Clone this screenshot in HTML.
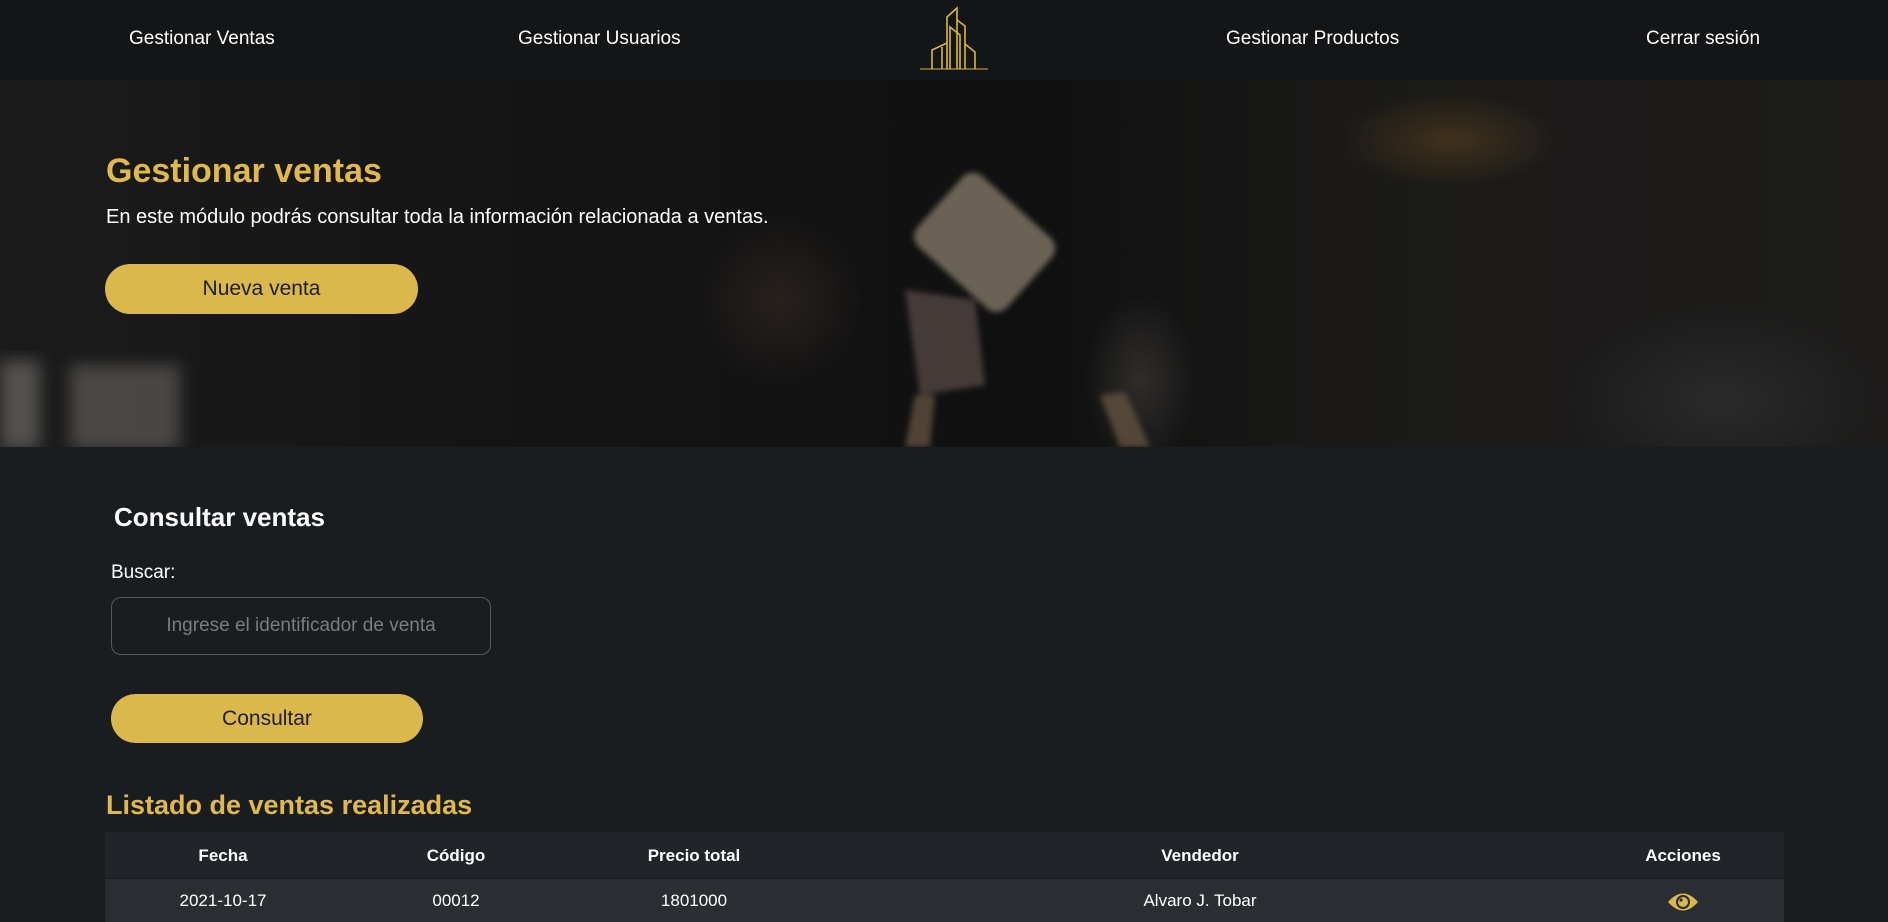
<!DOCTYPE html>
<html><head><meta charset="utf-8"><style>
*{margin:0;padding:0;box-sizing:border-box}
html,body{width:1888px;height:922px;overflow:hidden;background:#1a1d20;font-family:"Liberation Sans",sans-serif;color:#fff}
nav{position:absolute;left:0;top:0;width:1888px;height:80px;background:#141517}
nav a{position:absolute;top:28px;font-size:19px;color:#fff;text-decoration:none;line-height:22px}
.hero{position:absolute;left:0;top:80px;width:1888px;height:367px;overflow:hidden;
background:
radial-gradient(ellipse 140px 60px at 1450px 60px,rgba(120,85,30,.4),transparent 80%),
radial-gradient(ellipse 200px 120px at 1720px 320px,rgba(70,70,72,.35),transparent 80%),
radial-gradient(ellipse 110px 110px at 780px 220px,rgba(80,60,50,.35),transparent 80%),
radial-gradient(ellipse 70px 110px at 1140px 300px,rgba(90,85,80,.4),transparent 80%),
linear-gradient(90deg,#1b1b1b 0%,#141414 30%,#101010 55%,#1a1918 70%,#1d1c1b 100%)}
.hero svg{position:absolute;left:0;top:0}
h1{position:absolute;left:106px;top:152px;font-size:34px;color:#e1b94a;font-weight:bold}
.sub{position:absolute;left:106px;top:206px;font-size:20px}
.btn{position:absolute;background:#dab84c;border-radius:25px;color:#1e1e1e;font-size:21px;text-align:center}
h2{position:absolute;left:114px;top:502px;font-size:26px;font-weight:bold}
.lbl{position:absolute;left:111px;top:562px;font-size:19px}
.inp{position:absolute;left:111px;top:597px;width:380px;height:58px;border:1px solid #555a5f;border-radius:10px;color:#7a7d80;font-size:19px;text-align:center;line-height:56px}
h3{position:absolute;left:106px;top:790px;font-size:27px;color:#e1b94a;font-weight:bold}
.tbl{position:absolute;left:105px;top:832px;width:1679px;height:90px}
.hd{height:47px;background:#212428;border-bottom:1px solid #1a1c1f;position:relative}
.rw{height:43px;background:#2a2d31;position:relative}
.c{position:absolute;transform:translateX(-50%);font-size:17px;white-space:nowrap}
.hd .c{top:14px;font-weight:bold}
.rw .c{top:12px}
</style></head><body>
<nav>
<a style="left:129px">Gestionar Ventas</a>
<a style="left:518px">Gestionar Usuarios</a>
<svg style="position:absolute;left:919px;top:0" width="70" height="72" viewBox="0 0 70 72">
<g fill="none" stroke="#d9b83a" stroke-width="1.6">
<path d="M13 69V50L28 43"/><path d="M23 69V47"/>
<path d="M28 69V17L38 8V69"/><path d="M38 20L46 26V69"/>
<path d="M31 69V27L41 35V69"/><path d="M46 44L56 52V69"/>
</g><path d="M1 69H69" stroke="#d9b83a" stroke-width="1.2" opacity=".8"/></svg>
<a style="left:1226px">Gestionar Productos</a>
<a style="left:1646px">Cerrar sesión</a>
</nav>
<div class="hero">
<svg width="1888" height="367"><defs><filter id="b"><feGaussianBlur stdDeviation="8"/></filter><filter id="s"><feGaussianBlur stdDeviation="3"/></filter></defs>
<g transform="translate(0,-80)">
<g filter="url(#b)" opacity=".5">
<rect x="0" y="360" width="40" height="90" fill="#8a8580"/>
<rect x="70" y="365" width="110" height="85" fill="#7a7570"/>
</g>
<g filter="url(#s)">
<rect x="925" y="195" width="120" height="95" rx="14" transform="rotate(42 985 242)" fill="#6a6354"/>
<polygon points="905,290 975,300 985,385 920,395" fill="#4e4240" opacity=".85"/>
<polygon points="915,395 935,395 930,447 905,447" fill="#5e5040" opacity=".8"/>
<polygon points="1100,395 1125,392 1150,447 1120,447" fill="#605340" opacity=".8"/>
</g></g></svg>
</div>
<h1>Gestionar ventas</h1>
<div class="sub">En este módulo podrás consultar toda la información relacionada a ventas.</div>
<div class="btn" style="left:105px;top:264px;width:313px;height:50px;line-height:50px">Nueva venta</div>
<h2>Consultar ventas</h2>
<div class="lbl">Buscar:</div>
<div class="inp">Ingrese el identificador de venta</div>
<div class="btn" style="left:111px;top:694px;width:312px;height:49px;line-height:49px">Consultar</div>
<h3>Listado de ventas realizadas</h3>
<div class="tbl">
<div class="hd"><span class="c" style="left:118px">Fecha</span><span class="c" style="left:351px">Código</span><span class="c" style="left:589px">Precio total</span><span class="c" style="left:1095px">Vendedor</span><span class="c" style="left:1578px">Acciones</span></div>
<div class="rw"><span class="c" style="left:118px">2021-10-17</span><span class="c" style="left:351px">00012</span><span class="c" style="left:589px">1801000</span><span class="c" style="left:1095px">Alvaro J. Tobar</span>
<svg style="position:absolute;left:1562px;top:12px" width="32" height="22" viewBox="0 0 32 22"><path d="M1 11Q16 -6 31 11Q16 28 1 11Z" fill="#dab84c"/><circle cx="16" cy="11" r="6" fill="none" stroke="#2a2d31" stroke-width="2"/><circle cx="14" cy="9" r="1.6" fill="#2a2d31"/></svg></div>
</div>
</body></html>
